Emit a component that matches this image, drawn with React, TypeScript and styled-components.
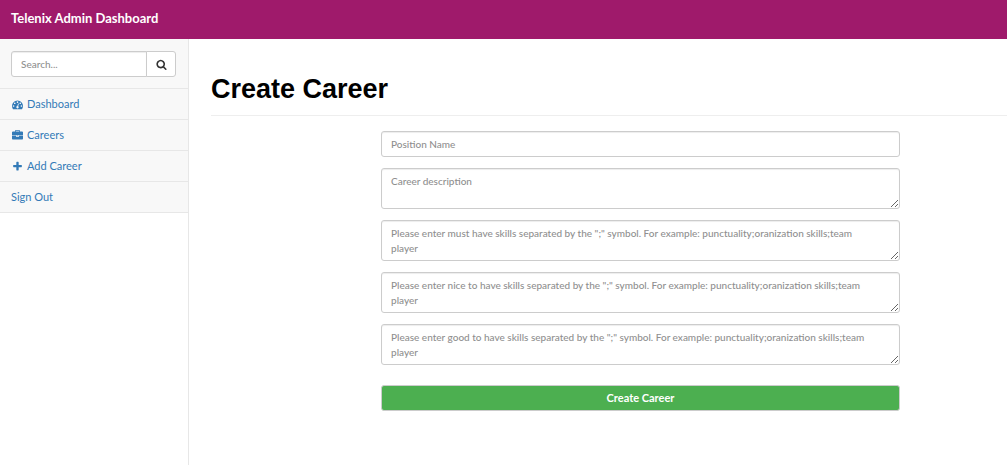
import React from "react";
import styled, { createGlobalStyle, css } from "styled-components";

const GlobalStyle = createGlobalStyle`
  *, *::before, *::after { box-sizing: border-box; }
  html, body, #root { height: 100%; }
  body {
    margin: 0;
    background: #fff;
    color: #333;
    font: 11px/15px Lato, "Liberation Sans", sans-serif;
  }
`;

const Page = styled.div`
  display: flex;
  flex-direction: column;
  min-height: 100%;
`;

const Navbar = styled.header`
  display: flex;
  align-items: center;
  height: 39px;
  padding: 0 11px 3px;
  background: #9f1a6b;
`;

const Brand = styled.a`
  color: #fff;
  font-size: 13px;
  line-height: 20px;
  font-weight: 700;
  text-decoration: none;
`;

const Body = styled.div`
  display: flex;
  flex: 1;
`;

const Sidebar = styled.nav`
  flex: 0 0 189px;
  border-right: 1px solid #e7e7e7;
`;

const Menu = styled.ul`
  margin: 0;
  padding: 0;
  list-style: none;
  background: #f8f8f8;
`;

const MenuItem = styled.li`
  border-bottom: 1px solid #e7e7e7;
`;

const MenuLink = styled.a`
  display: flex;
  align-items: center;
  gap: 3px;
  height: 30px;
  padding: 0 11px 2px;
  color: #337ab7;
  text-decoration: none;
`;

const IconSlot = styled.span`
  display: flex;
  justify-content: center;
  width: 13px;
  padding-top: 2px;
`;

const SearchForm = styled.form`
  display: flex;
  padding: 12px 12px 11px 11px;
`;

const controlStyle = css`
  border: 1px solid #ccc;
  border-radius: 3px;
  background: #fff;
  font: inherit;
  color: #555;
`;

const fieldStyle = css`
  ${controlStyle}
  display: block;
  width: 100%;
  min-width: 0;
  padding: 5px 9px;
  font-size: 10px;
  font-weight: 500;
  box-shadow: inset 0 1px 1px rgba(0, 0, 0, 0.075);
  &::placeholder { color: #8f8f8f; opacity: 1; }
`;

const TextInput = styled.input<{ $joined?: boolean }>`
  ${fieldStyle}
  height: 26px;
  padding-bottom: 6px;
  ${(p) => p.$joined && css`border-radius: 3px 0 0 3px;`}
`;

const TextArea = styled.textarea`
  ${fieldStyle}
  height: 41px;
  padding-right: 20px;
  padding-bottom: 4px;
  overflow: auto;
  resize: vertical;
`;

const SearchButton = styled.button`
  ${controlStyle}
  display: flex;
  flex: 0 0 30px;
  align-items: center;
  justify-content: center;
  margin-left: -1px;
  padding: 0;
  border-radius: 0 3px 3px 0;
  color: #333;
`;

const Main = styled.main`
  flex: 1;
  min-width: 0;
  padding: 31px 0 22px 22px;
`;

const PageHeader = styled.h1`
  margin: 0 0 15px;
  padding-bottom: 6px;
  border-bottom: 1px solid #eee;
  color: #000;
  font: 700 27px/39px "Liberation Sans", Arial, sans-serif;
`;

const FormGrid = styled.div`
  display: grid;
  grid-template-columns: 170fr 519fr 107fr;
`;

const CareerForm = styled.form`
  display: flex;
  flex-direction: column;
  grid-column: 2;
  gap: 11px;
`;

const SubmitButton = styled.button`
  height: 26px;
  margin-top: 9px;
  padding: 0 9px 2px;
  border: 1px solid #ccc;
  border-radius: 3px;
  background: #4caf50;
  color: #fff;
  font: inherit;
  font-weight: 700;
`;

const icons = {
  search:
    "M1216 832q0-185-131.5-316.5t-316.5-131.5-316.5 131.5-131.5 316.5 131.5 316.5 316.5 131.5 316.5-131.5 131.5-316.5zm512 832q0 52-38 90t-90 38q-54 0-90-38l-343-342q-179 124-399 124-143 0-273.5-55.5t-225-150-150-225-55.5-273.5 55.5-273.5 150-225 225-150 273.5-55.5 273.5 55.5 225 150 150 225 55.5 273.5q0 220-124 399l343 343q37 37 37 90z",
  gauge:
    "M384 1152q0-53-37.5-90.5t-90.5-37.5-90.5 37.5-37.5 90.5 37.5 90.5 90.5 37.5 90.5-37.5 37.5-90.5zm192-448q0-53-37.5-90.5t-90.5-37.5-90.5 37.5-37.5 90.5 37.5 90.5 90.5 37.5 90.5-37.5 37.5-90.5zm428 481l101-382q6-26-7.5-48.5t-38.5-29.5-48 6.5-30 39.5l-101 382q-60 5-107 43.5t-63 98.5q-20 77 20 146t117 89 146-20 89-117q16-60-6-117t-72-91zm660-33q0-53-37.5-90.5t-90.5-37.5-90.5 37.5-37.5 90.5 37.5 90.5 90.5 37.5 90.5-37.5 37.5-90.5zm-640-640q0-53-37.5-90.5t-90.5-37.5-90.5 37.5-37.5 90.5 37.5 90.5 90.5 37.5 90.5-37.5 37.5-90.5zm448 192q0-53-37.5-90.5t-90.5-37.5-90.5 37.5-37.5 90.5 37.5 90.5 90.5 37.5 90.5-37.5 37.5-90.5zm320 448q0 261-141 483-19 29-54 29h-1402q-35 0-54-29-141-221-141-483 0-182 71-348t191-286 286-191 348-71 348 71 286 191 191 286 71 348z",
  briefcase:
    "M640 256h512v-128h-512v128zm1152 640v480q0 66-47 113t-113 47h-1472q-66 0-113-47t-47-113v-480h672v160q0 26 19 45t45 19h320q26 0 45-19t19-45v-160h672zm-768 0v128h-256v-128h256zm768-480v384h-1792v-384q0-66 47-113t113-47h352v-160q0-40 28-68t68-28h576q40 0 68 28t28 68v160h352q66 0 113 47t47 113z",
  plus:
    "M1600 736v192q0 40-28 68t-68 28h-416v416q0 40-28 68t-68 28h-192q-40 0-68-28t-28-68v-416h-416q-40 0-68-28t-28-68v-192q0-40 28-68t68-28h416v-416q0-40 28-68t68-28h192q40 0 68 28t28 68v416h416q40 0 68 28t28 68z",
};

function Icon({ name }: { name: keyof typeof icons }) {
  return (
    <svg width="11" height="11" viewBox="0 0 1792 1792" fill="currentColor" aria-hidden="true">
      <path d={icons[name]} />
    </svg>
  );
}

const links: { label: string; icon?: keyof typeof icons }[] = [
  { label: "Dashboard", icon: "gauge" },
  { label: "Careers", icon: "briefcase" },
  { label: "Add Career", icon: "plus" },
  { label: "Sign Out" },
];

const skillHint = (kind: string) =>
  `Please enter ${kind} have skills separated by the ";" symbol. For example: punctuality;oranization skills;team player`;

export default function App() {
  return (
    <Page>
      <GlobalStyle />
      <Navbar>
        <Brand href="#">Telenix Admin Dashboard</Brand>
      </Navbar>
      <Body>
        <Sidebar>
          <Menu>
            <MenuItem>
              <SearchForm onSubmit={(e) => e.preventDefault()}>
                <TextInput $joined type="text" placeholder="Search..." aria-label="Search" />
                <SearchButton type="submit" aria-label="Search">
                  <Icon name="search" />
                </SearchButton>
              </SearchForm>
            </MenuItem>
            {links.map(({ label, icon }) => (
              <MenuItem key={label}>
                <MenuLink href="#">
                  {icon && (
                    <IconSlot>
                      <Icon name={icon} />
                    </IconSlot>
                  )}
                  {label}
                </MenuLink>
              </MenuItem>
            ))}
          </Menu>
        </Sidebar>
        <Main>
          <PageHeader>Create Career</PageHeader>
          <FormGrid>
            <CareerForm onSubmit={(e) => e.preventDefault()}>
              <TextInput type="text" placeholder="Position Name" aria-label="Position Name" />
              <TextArea placeholder="Career description" aria-label="Career description" />
              <TextArea placeholder={skillHint("must")} aria-label="Must have skills" />
              <TextArea placeholder={skillHint("nice to")} aria-label="Nice to have skills" />
              <TextArea placeholder={skillHint("good to")} aria-label="Good to have skills" />
              <SubmitButton type="submit">Create Career</SubmitButton>
            </CareerForm>
          </FormGrid>
        </Main>
      </Body>
    </Page>
  );
}
